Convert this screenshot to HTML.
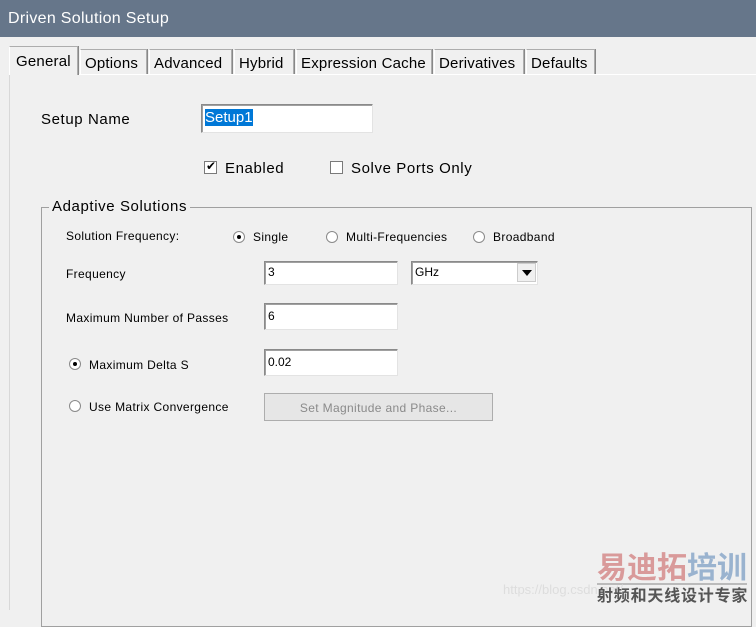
<!DOCTYPE html>
<html><head><style>
*{margin:0;padding:0;box-sizing:border-box}
body{width:756px;height:610px;background:#f0f0f0;font-family:"Liberation Sans","DejaVu Sans",sans-serif;position:relative;overflow:hidden;color:#000}
.a{position:absolute;white-space:nowrap}
.title{left:0;top:0;width:756px;height:37px;background:#66768a;color:#fff;font-size:16px;padding:10px 0 0 8px;letter-spacing:0.3px}
.tab{top:49px;height:25px;border:1px solid #adadad;border-bottom:none;border-left-color:#fff;font-size:15px;padding:5px 3px 0 4px;background:#f0f0f0;box-shadow:1px 0 0 #888;letter-spacing:0.2px}
.big{font-size:15px;letter-spacing:0.6px}
.sm{font-size:12px;letter-spacing:0.35px}
.inp{background:#fff;border:1px solid #8a8a8a;border-right-color:#e3e3e3;border-bottom-color:#e3e3e3;box-shadow:inset 1px 1px 0 #a0a0a0;font-size:12px;padding:3px 0 0 3px}
.rad{width:12px;height:12px;border-radius:50%;background:#fff;border:1px solid #8a8a8a}
.rad.on::after{content:"";position:absolute;left:3px;top:3px;width:4px;height:4px;border-radius:50%;background:#000}
.cb{width:13px;height:13px;background:#fff;border:1px solid #7a7a7a}
</style></head><body>
<div class="a title">Driven Solution Setup</div>
<div class="a" style="left:9px;top:74px;width:747px;height:536px;border-left:1px solid #fff;border-top:1px solid #fff"></div>
<div class="a" style="left:9px;top:74px;width:1px;height:536px;background:#d8d8d8"></div>
<div class="a tab" style="left:80px;width:67px">Options</div>
<div class="a tab" style="left:149px;width:83px">Advanced</div>
<div class="a tab" style="left:234px;width:60px">Hybrid</div>
<div class="a tab" style="left:296px;width:136px">Expression Cache</div>
<div class="a tab" style="left:434px;width:90px">Derivatives</div>
<div class="a tab" style="left:526px;width:69px">Defaults</div>
<div class="a tab" style="left:9px;top:46px;height:29px;width:69px;border-bottom:none;padding:6px 0 0 6px;z-index:2">General</div>
<div class="a big" style="left:41px;top:111px">Setup Name</div>
<div class="a inp" style="left:201px;top:104px;width:172px;height:29px;font-size:15px;padding:4px 0 0 3px"><span style="background:#0078d7;color:#fff">Setup1</span></div>
<div class="a cb" style="left:204px;top:161px"><span class="a" style="left:1px;top:-3px;font-size:12px">✔</span></div>
<div class="a big" style="left:225px;top:160px">Enabled</div>
<div class="a cb" style="left:330px;top:161px"></div>
<div class="a big" style="left:351px;top:160px">Solve Ports Only</div>
<div class="a" style="left:41px;top:207px;width:711px;height:420px;border:1px solid #a0a0a0"></div>
<div class="a big" style="left:49px;top:198px;background:#f0f0f0;padding:0 3px">Adaptive Solutions</div>
<div class="a sm" style="left:66px;top:229px">Solution Frequency:</div>
<div class="a rad on" style="left:233px;top:231px"></div><div class="a sm" style="left:253px;top:230px">Single</div>
<div class="a rad" style="left:326px;top:231px"></div><div class="a sm" style="left:346px;top:230px">Multi-Frequencies</div>
<div class="a rad" style="left:473px;top:231px"></div><div class="a sm" style="left:493px;top:230px">Broadband</div>
<div class="a sm" style="left:66px;top:267px">Frequency</div>
<div class="a inp" style="left:264px;top:261px;width:134px;height:24px">3</div>
<div class="a inp" style="left:411px;top:261px;width:127px;height:24px">GHz
<div class="a" style="right:1px;top:1px;width:19px;height:19px;background:#f0f0f0;border:1px solid #ccc"><div class="a" style="left:4px;top:6px;border-left:5px solid transparent;border-right:5px solid transparent;border-top:6px solid #000"></div></div></div>
<div class="a sm" style="left:66px;top:311px">Maximum Number of Passes</div>
<div class="a inp" style="left:264px;top:303px;width:134px;height:27px;padding-top:5px">6</div>
<div class="a rad on" style="left:69px;top:358px"></div><div class="a sm" style="left:89px;top:358px">Maximum Delta S</div>
<div class="a inp" style="left:264px;top:349px;width:134px;height:27px;padding-top:5px">0.02</div>
<div class="a rad" style="left:69px;top:400px"></div><div class="a sm" style="left:89px;top:400px">Use Matrix Convergence</div>
<div class="a sm" style="left:264px;top:393px;width:229px;height:28px;border:1px solid #adadad;background:#e6e6e6;color:#8a8a8a;text-align:center;padding-top:7px">Set Magnitude and Phase...</div>
<div class="a" style="left:597px;top:550px;font-size:30px;font-weight:bold;color:#d99a9a;font-family:'Noto Sans CJK SC',sans-serif;line-height:1">易迪拓<span style="color:#9ab3cf">培训</span></div>
<div class="a" style="left:597px;top:583px;width:150px;height:2px;background:#bbb"></div>
<div class="a" style="left:503px;top:582px;font-size:13px;color:#ddd">https://blog.csdn.net/</div>
<div class="a" style="left:597px;top:586px;font-size:16px;font-weight:bold;color:#555;font-family:'Noto Sans CJK SC',sans-serif;line-height:1;letter-spacing:0.8px">射频和天线设计专家</div>
</body></html>
